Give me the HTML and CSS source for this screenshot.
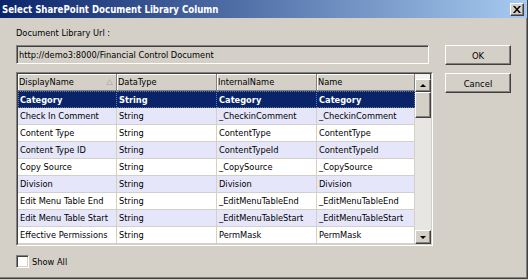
FILE: index.html
```html
<!DOCTYPE html>
<html>
<head>
<meta charset="utf-8">
<link rel="stylesheet" href="styles.css">
</head>
<body>
<div class="window">
  <div class="titlebar">
    <span class="title">Select SharePoint Document Library Column</span>
    <span class="close"><svg width="8" height="7" viewBox="0 0 8 7"><path d="M0 0h2l2 2.5L6 0h2L5 3.5 8 7H6L4 4.5 2 7H0l3-3.5z" fill="#000"/></svg></span>
  </div>
  <div class="content">
    <div class="label">Document Library Url :</div>
    <div class="url-row">
      <div class="textbox">http://demo3:8000/Financial Control Document</div>
      <div class="btn">OK</div>
    </div>
    <div class="grid-row">
      <div class="grid">
        <div class="grid-inner">
          <div class="table">
            <div class="tr head">
              <div class="th sorted"><span>DisplayName</span><svg width="7" height="6" viewBox="0 0 7 6"><path d="M3.5 0.5L6.5 5.5H0.5z" fill="none" stroke="#b8b4ac" stroke-width="1"/></svg></div>
              <div class="th">DataType</div>
              <div class="th">InternalName</div>
              <div class="th">Name</div>
            </div>
            <div class="tr selected">
              <div class="td">Category</div><div class="td">String</div><div class="td">Category</div><div class="td">Category</div>
            </div>
            <div class="tr alt">
              <div class="td">Check In Comment</div><div class="td">String</div><div class="td">_CheckinComment</div><div class="td">_CheckinComment</div>
            </div>
            <div class="tr">
              <div class="td">Content Type</div><div class="td">String</div><div class="td">ContentType</div><div class="td">ContentType</div>
            </div>
            <div class="tr alt">
              <div class="td">Content Type ID</div><div class="td">String</div><div class="td">ContentTypeId</div><div class="td">ContentTypeId</div>
            </div>
            <div class="tr">
              <div class="td">Copy Source</div><div class="td">String</div><div class="td">_CopySource</div><div class="td">_CopySource</div>
            </div>
            <div class="tr alt">
              <div class="td">Division</div><div class="td">String</div><div class="td">Division</div><div class="td">Division</div>
            </div>
            <div class="tr">
              <div class="td">Edit Menu Table End</div><div class="td">String</div><div class="td">_EditMenuTableEnd</div><div class="td">_EditMenuTableEnd</div>
            </div>
            <div class="tr alt">
              <div class="td">Edit Menu Table Start</div><div class="td">String</div><div class="td">_EditMenuTableStart</div><div class="td">_EditMenuTableStart</div>
            </div>
            <div class="tr">
              <div class="td">Effective Permissions</div><div class="td">String</div><div class="td">PermMask</div><div class="td">PermMask</div>
            </div>
          </div>
          <div class="vscroll">
            <div class="sb-corner"></div>
            <div class="sb-btn"><span class="arrow-up"></span></div>
            <div class="sb-thumb"></div>
            <div class="sb-track"></div>
            <div class="sb-btn"><span class="arrow-down"></span></div>
          </div>
        </div>
      </div>
      <div class="btn cancel">Cancel</div>
    </div>
    <div class="check-row">
      <span class="checkbox"></span>
      <span class="check-label">Show All</span>
    </div>
  </div>
</div>
</body>
</html>
```

FILE: styles.css
```css
* { box-sizing: border-box; }
html, body { margin: 0; padding: 0; }
body {
  width: 528px;
  height: 280px;
  background: #d4d0c8;
  font-family: "DejaVu Sans Condensed", "DejaVu Sans", sans-serif;
  font-stretch: condensed;
  font-size: 9.2px;
  color: #000;
  overflow: hidden;
}
.window {
  width: 528px;
  height: 279px;
  border-right: 1px solid #404040;
  border-bottom: 1px solid #404040;
  box-shadow: inset -1px -1px 0 #808080;
  display: flex;
  flex-direction: column;
}
.titlebar {
  height: 18px;
  flex: none;
  background: linear-gradient(to right, #0a246a, #a6caf0);
  display: flex;
  align-items: center;
  justify-content: space-between;
  padding: 0 3px 0 2px;
}
.title {
  color: #fff;
  font-weight: bold;
  font-size: 9.6px;
}
.close {
  width: 14px;
  height: 13px;
  background: #d4d0c8;
  border-top: 1px solid #fff;
  border-left: 1px solid #fff;
  border-right: 1px solid #404040;
  border-bottom: 1px solid #404040;
  box-shadow: inset -1px -1px 0 #808080;
  display: flex;
  align-items: center;
  justify-content: center;
}
.close svg { display: block; }
.content {
  flex: 1;
  padding: 8px 16px 0 16px;
  display: flex;
  flex-direction: column;
}
.label {
  height: 12px;
  line-height: 13px;
}
.url-row {
  margin-top: 7px;
  display: flex;
  align-items: flex-start;
}
.textbox {
  width: 413px;
  height: 19px;
  line-height: 15px;
  border-top: 1px solid #808080;
  border-left: 1px solid #808080;
  border-right: 1px solid #fff;
  border-bottom: 1px solid #fff;
  box-shadow: inset 1px 1px 0 #404040;
  background: #d4d0c8;
  padding-top: 1px;
  padding-left: 2px;
  white-space: nowrap;
}
.btn {
  margin-left: auto;
  width: 66px;
  height: 20px;
  border-top: 1px solid #fff;
  border-left: 1px solid #fff;
  border-right: 1px solid #404040;
  border-bottom: 1px solid #404040;
  box-shadow: inset -1px -1px 0 #808080;
  display: flex;
  align-items: center;
  justify-content: center;
  font-size: 9.4px;
}
.cancel { margin-top: 1px; }
.grid-row {
  margin-top: 7px;
  display: flex;
  align-items: flex-start;
}
.grid {
  width: 417px;
  height: 174px;
  border-top: 1px solid #808080;
  border-left: 1px solid #808080;
  border-right: 1px solid #fff;
  border-bottom: 1px solid #fff;
}
.grid-inner {
  width: 415px;
  height: 172px;
  border-top: 1px solid #404040;
  border-left: 1px solid #404040;
  border-right: 1px solid #d4d0c8;
  border-bottom: 1px solid #d4d0c8;
  display: flex;
  background: #fff;
}
.table {
  width: 397px;
  display: flex;
  flex-direction: column;
}
.tr {
  display: flex;
  height: 17px;
  flex: none;
}
.th, .td {
  flex: none;
  height: 17px;
  line-height: 16px;
  padding-left: 2px;
  white-space: nowrap;
  overflow: hidden;
}
.tr > :nth-child(1) { width: 99px; }
.tr > :nth-child(2) { width: 100px; }
.tr > :nth-child(3) { width: 100px; }
.tr > :nth-child(4) { width: 98px; }
.th {
  background: #d4d0c8;
  border-right: 1px solid #808080;
  border-bottom: 1px solid #808080;
  box-shadow: inset 1px 1px 0 #fff;
  padding-left: 1px;
}
.th.sorted {
  display: flex;
  align-items: center;
  justify-content: space-between;
  padding-right: 3px;
}
.th.sorted svg { display: block; }
.td {
  background: #fff;
  border-right: 1px solid #d4d0c8;
  border-bottom: 1px solid #d4d0c8;
}
.tr.alt .td { background: #e6e6fa; }
.tr.selected .td {
  background: #0a246a;
  color: #fff;
  font-weight: bold;
  border: 1px dotted #6f78a8;
  border-left: none;
  line-height: 15px;
  padding-left: 2px;
}
.tr.selected .td:first-child { border-left: 1px dotted #6f78a8; padding-left: 1px; }
.vscroll {
  width: 16px;
  display: flex;
  flex-direction: column;
  background: #d4d0c8;
}
.sb-corner {
  height: 5px;
  background: #f4f3f0;
  border-right: 1px solid #404040;
}
.sb-btn, .sb-thumb {
  background: #d4d0c8;
  border-top: 1px solid #fff;
  border-left: 1px solid #fff;
  border-right: 1px solid #404040;
  border-bottom: 1px solid #404040;
  box-shadow: inset -1px -1px 0 #808080;
  display: flex;
  align-items: center;
  justify-content: center;
}
.sb-btn { height: 13px; flex: none; }
.sb-btn:last-child { height: 14px; }
.sb-thumb { height: 26px; flex: none; }
.sb-track { flex: 1; background: #e8e6e2; }
.arrow-up {
  width: 0; height: 0;
  border-left: 3px solid transparent;
  border-right: 3px solid transparent;
  border-bottom: 3px solid #000;
}
.arrow-down {
  width: 0; height: 0;
  border-left: 3px solid transparent;
  border-right: 3px solid transparent;
  border-top: 3px solid #000;
}
.check-row {
  margin-top: 9px;
  display: flex;
  align-items: center;
  height: 13px;
}
.checkbox {
  width: 13px;
  height: 13px;
  background: #fff;
  border-top: 1px solid #808080;
  border-left: 1px solid #808080;
  border-right: 1px solid #fff;
  border-bottom: 1px solid #fff;
  box-shadow: inset 1px 1px 0 #404040, inset -1px -1px 0 #d4d0c8;
}
.check-label { margin-left: 3px; }
```
